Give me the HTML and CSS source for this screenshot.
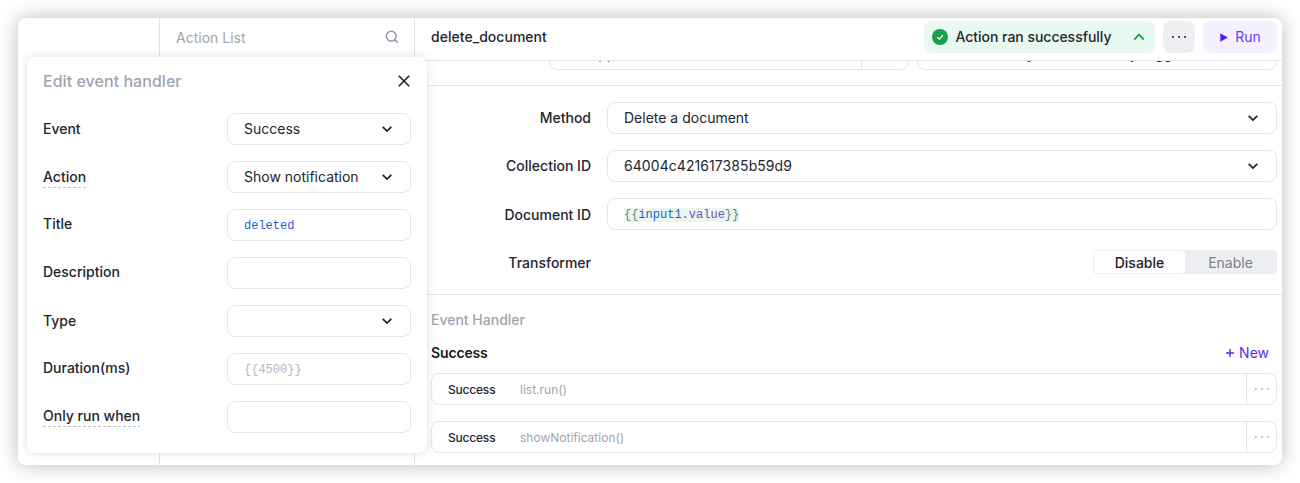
FILE: index.html
```html
<!DOCTYPE html>
<html lang="en">
<head>
<meta charset="utf-8">
<title>Action editor</title>
<link rel="stylesheet" href="styles.css">
</head>
<body>
<svg width="0" height="0" class="defs">
  <symbol id="down" viewBox="0 0 12 12"><path d="M1.7 3.9 6 8.1l4.3-4.2" fill="none" stroke="currentColor" stroke-width="1.8"/></symbol>
  <symbol id="dots" viewBox="0 0 16 4"><circle cx="1.9" cy="2" r="1"/><circle cx="8" cy="2" r="1"/><circle cx="14.1" cy="2" r="1"/></symbol>
</svg>
<div class="window">
  <div class="sidebar"></div>
  <div class="list">
    <div class="list-head">
      <span>Action List</span>
      <svg class="search" viewBox="0 0 14 14"><circle cx="6.2" cy="6.2" r="4.9"/><path d="m9.6 9.6 3.3 3.1"/></svg>
    </div>
  </div>
  <main class="main">
    <header class="head">
      <span class="name">delete_document</span>
      <div class="result">
        <svg class="ok" viewBox="0 0 16 16"><circle cx="8" cy="8" r="8" fill="#1a9f4a"/><path d="m5.2 8.1 2 2 3.7-3.8" fill="none" stroke="#fff" stroke-width="1.3"/></svg>
        <span>Action ran successfully</span>
        <svg class="up" viewBox="0 0 12 12"><path d="M1.2 8.6 6 3.6l4.8 5" fill="none" stroke="#1a9f4a" stroke-width="1.8"/></svg>
      </div>
      <button class="more"><svg class="dots"><use href="#dots"/></svg></button>
      <button class="run"><svg class="play" viewBox="0 0 8 9"><path d="M.3.2 7.8 4.5.3 8.8z" fill="#4f20ee"/></svg>Run</button>
    </header>
    <div class="scroll">
      <div class="resource">
        <div class="select source"><span>rnb appwrite</span><i class="edit"></i></div>
        <div class="select mode"><span>Run action only when manually triggered</span></div>
      </div>
      <section class="params">
        <label>Method</label>
        <div class="field">Delete a document<svg class="chev"><use href="#down"/></svg></div>
        <label>Collection ID</label>
        <div class="field id">64004c421617385b59d9<svg class="chev"><use href="#down"/></svg></div>
        <label class="low">Document ID</label>
        <div class="field"><code class="expr">{{<b>input1.</b><em>value</em>}}</code></div>
        <label class="low">Transformer</label>
        <div class="toggle-row"><div class="toggle"><span class="on">Disable</span><span>Enable</span></div></div>
      </section>
      <section class="events">
        <h2>Event Handler</h2>
        <div class="group"><h3>Success</h3><a class="new"><svg viewBox="0 0 8 8"><path d="M4 0v8M0 4h8" stroke="currentColor" stroke-width="1.4"/></svg>New</a></div>
        <div class="event"><span class="kind">Success</span><span class="call">list.run()</span><span class="menu"><svg class="dots"><use href="#dots"/></svg></span></div>
        <div class="event"><span class="kind">Success</span><span class="call">showNotification()</span><span class="menu"><svg class="dots"><use href="#dots"/></svg></span></div>
      </section>
    </div>
  </main>
  <div class="popup">
    <div class="popup-head"><span>Edit event handler</span><svg class="close" viewBox="0 0 12 12"><path d="m.8.8 10.4 10.4M11.2.8.8 11.2" stroke="#1f2027" stroke-width="1.6"/></svg></div>
    <div class="form">
      <label>Event</label><div class="field">Success<svg class="chev"><use href="#down"/></svg></div>
      <label><span class="hint">Action</span></label><div class="field">Show notification<svg class="chev"><use href="#down"/></svg></div>
      <label class="high">Title</label><div class="field"><code class="str">deleted</code></div>
      <label class="high">Description</label><div class="field"></div>
      <label>Type</label><div class="field"><svg class="chev"><use href="#down"/></svg></div>
      <label class="high">Duration(ms)</label><div class="field"><code class="ghost">{{4500}}</code></div>
      <label class="high"><span class="hint">Only run when</span></label><div class="field"></div>
    </div>
  </div>
</div>
</body>
</html>
```
FILE: styles.css
```css
* { box-sizing: border-box; }
body { margin: 0; padding: 18px; height: 483px; overflow: hidden; background: #fff; color: #24262e; font: 14px/22px Inter, sans-serif; }
.defs { position: absolute; }
.window { position: relative; display: flex; width: 1264px; height: 447px; border-radius: 8px; background: #fff; box-shadow: 0 0 20px rgba(0, 0, 0, .27); }
.sidebar { width: 142px; border-right: 1px solid #e1e2e8; }
.list { width: 255px; border-right: 1px solid #e1e2e8; }
.list-head { display: flex; align-items: center; justify-content: space-between; height: 40px; padding: 0 15px 0 16px; color: #a0a3b1; }
.search { width: 14px; height: 14px; margin-top: -2px; fill: none; stroke: #9598a8; stroke-width: 1.5; }
.main { flex: 1; min-width: 0; display: flex; flex-direction: column; }
.head { display: flex; align-items: flex-start; gap: 8px; height: 43px; padding: 3px 5px 0 16px; border-bottom: 1px solid #e4e5eb; line-height: 32px; }
.name { flex: 1; font-weight: 500; letter-spacing: .03px; }
.result { display: flex; align-items: center; width: 231px; height: 32px; padding: 0 10px 0 8px; border-radius: 8px; background: #e8f9f2; font-weight: 500; }
.result span { flex: 1; margin-left: 7.5px; letter-spacing: -.03px; }
.ok { width: 16px; height: 16px; }
.up { width: 12px; height: 12px; }
button { display: flex; align-items: center; justify-content: center; height: 32px; padding: 0; border: 0; border-radius: 8px; font: 500 14px/32px Inter, sans-serif; }
.more { width: 32px; background: #eeeff2; color: #1f2027; }
.run { width: 74px; gap: 7px; padding-left: 1px; background: #f4f0ff; color: #6540ee; font-weight: 400; }
.play { width: 8px; height: 9px; }
.dots { width: 16px; height: 4px; fill: currentColor; }
.scroll { flex: 1; overflow: hidden; }
.resource { display: flex; gap: 8px; margin-top: -23px; padding: 0 5px 15px 134px; border-bottom: 1px solid #e4e5eb; }
.select { display: flex; align-items: center; flex: 1; height: 32px; padding-left: 16px; border: 1px solid #e4e5eb; border-radius: 8px; white-space: nowrap; }
.source { padding-left: 14px; }
.mode { padding-left: 15px; }
.edit { width: 47px; height: 30px; margin-left: auto; border-left: 1px solid #e4e5eb; }
.params { display: grid; grid-template-columns: 160px 1fr; gap: 16px; padding: 16px 5px 16px 16px; border-bottom: 1px solid #e4e5eb; align-items: center; }
.params label { text-align: right; font-weight: 500; }
.params .low { padding-top: 2px; }
.field { display: flex; align-items: center; height: 32px; padding: 0 17px 0 16px; border: 1px solid #e4e5eb; border-radius: 8px; white-space: nowrap; }
.id { letter-spacing: .07px; }
.chev { width: 12px; height: 12px; margin-left: auto; }
code { font: 12px/14px "Liberation Mono", monospace; }
.expr { margin-top: 1px; background: #e9f7f0; color: #727a7a; }
.expr b { color: #1a61d0; font-weight: 400; }
.expr em { color: #764bc5; font-style: normal; }
.str { padding-top: 1px; color: #1a61d0; }
.ghost { padding-top: 1px; color: #b4b6c1; }
.toggle-row { display: flex; justify-content: flex-end; height: 32px; padding-top: 4px; }
.toggle { display: flex; width: 184px; height: 24px; padding: 1px; border-radius: 4px; background: #eeeff2; color: #7c7f89; }
.toggle span { flex: 1; text-align: center; line-height: 23px; }
.toggle .on { border-radius: 3px; background: #fff; color: #1f2027; font-weight: 500; }
.events { padding: 14px 5px 0 16px; }
h2, h3 { margin: 0; font-size: 14px; line-height: 22px; font-weight: 500; }
h2 { color: #a0a3b1; }
h3 { font-weight: 600; letter-spacing: -.15px; color: #16171c; }
.group { display: flex; justify-content: space-between; margin: 11px 0 9px; }
.new { display: flex; align-items: center; gap: 5px; padding-right: 8px; color: #5a28ee; }
.new svg { width: 8px; height: 8px; }
.event { display: flex; align-items: center; height: 32px; margin-bottom: 16px; padding-left: 16px; border: 1px solid #e4e5eb; border-radius: 8px; font-size: 12px; line-height: 23px; }
.kind { width: 72px; font-weight: 500; letter-spacing: -.2px; }
.call { color: #a0a3b1; }
.menu { display: flex; align-items: center; justify-content: center; width: 30px; height: 30px; margin-left: auto; border-left: 1px solid #e4e5eb; color: #b7b9c4; }
.popup { position: absolute; left: 9px; top: 39px; width: 400px; height: 396px; padding: 13px 16px 0; border-radius: 8px; background: #fff; box-shadow: 0 0 10px rgba(0, 0, 0, .13); }
.popup-head { display: flex; align-items: center; justify-content: space-between; height: 22px; margin-bottom: 21px; color: #a0a3b1; font-size: 16px; font-weight: 500; letter-spacing: .04px; }
.close { width: 12px; height: 12px; margin-right: 1px; }
.form { display: grid; grid-template-columns: 184px 184px; row-gap: 16px; align-items: center; }
.form label { font-weight: 500; }
.form .high { padding-bottom: 2px; }
.hint { display: inline-block; background: repeating-linear-gradient(90deg, #c0c2cc 0 3px, transparent 3px 5px) bottom / 100% 1px no-repeat; }
```
